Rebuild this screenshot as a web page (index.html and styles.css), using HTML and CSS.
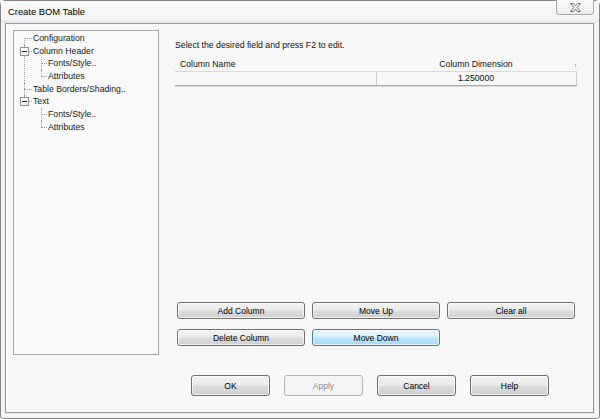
FILE: index.html
```html
<!DOCTYPE html>
<html>
<head>
<meta charset="utf-8">
<title>Create BOM Table</title>
<link rel="stylesheet" href="styles.css">
</head>
<body>
<div class="window">
  <div class="titlebar">
    <span class="title">Create BOM Table</span>
    <button class="close" aria-label="Close">
      <svg width="11" height="9" viewBox="0 0 11 9"><polygon points="0.5,0.5 3.5,0.5 5.5,3 7.5,0.5 10.5,0.5 7,4.5 10.5,8.5 7.5,8.5 5.5,6 3.5,8.5 0.5,8.5 4,4.5" fill="#fff" stroke="#707070" stroke-width="1"/></svg>
    </button>
  </div>
  <div class="client">
    <div class="main">
      <div class="tree-panel">
        <ul class="tree">
          <li><div class="row">Configuration</div></li>
          <li>
            <div class="row"><span class="toggle"></span>Column Header</div>
            <ul class="sub">
              <li><div class="row">Fonts/Style..</div></li>
              <li><div class="row">Attributes</div></li>
            </ul>
          </li>
          <li><div class="row">Table Borders/Shading..</div></li>
          <li>
            <div class="row"><span class="toggle"></span>Text</div>
            <ul class="sub">
              <li><div class="row">Fonts/Style..</div></li>
              <li><div class="row">Attributes</div></li>
            </ul>
          </li>
        </ul>
      </div>
      <div class="right">
        <p class="hint">Select the desired field and press F2 to edit.</p>
        <table class="grid">
          <colgroup><col class="c-name"><col class="c-dim"></colgroup>
          <thead>
            <tr><th class="name">Column Name</th><th class="dim">Column Dimension</th></tr>
          </thead>
          <tbody>
            <tr><td class="name"></td><td class="dim">1.250000</td></tr>
          </tbody>
        </table>
        <div class="actions">
          <button class="btn">Add Column</button>
          <button class="btn">Move Up</button>
          <button class="btn">Clear all</button>
          <button class="btn">Delete Column</button>
          <button class="btn hot">Move Down</button>
        </div>
      </div>
    </div>
    <div class="footer">
      <button class="btn big">OK</button>
      <button class="btn big disabled">Apply</button>
      <button class="btn big">Cancel</button>
      <button class="btn big">Help</button>
    </div>
  </div>
</div>
</body>
</html>
```
FILE: styles.css
```css
html, body {
  margin: 0;
  padding: 0;
  background: #f7f7f7;
}
body {
  font-family: "Liberation Sans", Arial, sans-serif;
  font-size: 8.7px;
  color: #111;
}
.window {
  width: 600px;
  height: 419px;
  box-sizing: border-box;
  border: 1px solid #858585;
  border-radius: 5px 5px 3px 3px;
  background: #f5f5f5;
  padding: 0 5px 5px 4px;
  display: flex;
  flex-direction: column;
}
.titlebar {
  height: 22px;
  display: flex;
  justify-content: space-between;
  align-items: flex-start;
  margin-left: -4px;
  margin-right: -5px;
  padding: 0 5px 0 7px;
  background: linear-gradient(#fafafa, #f3f3f3 85%, #e4ecf2 92%, #eef0f2);
}
.title {
  font-size: 9.4px;
  line-height: 22px;
  color: #000;
}
.close {
  width: 38px;
  height: 15px;
  margin: -1px 0 0 0;
  padding: 0;
  border: 1px solid #a9a9a9;
  border-top: none;
  border-radius: 0 0 4px 4px;
  background: linear-gradient(#fbfbfb, #eeeeee);
  display: flex;
  align-items: center;
  justify-content: center;
}
.close svg { display: block; margin-top: 1px; }
.client {
  flex: 1;
  border: 1px solid #9c9c9c;
  box-shadow: 0 0 0 1px #e8e8e8;
  background: #f8f8f8;
  padding: 6px 16px 15px 7px;
  display: flex;
  flex-direction: column;
}
.main {
  display: flex;
  gap: 16px;
  height: 325px;
}
.tree-panel {
  width: 146px;
  box-sizing: border-box;
  border: 1px solid #a7a7a7;
  background: #f9f9f9;
}
.tree, .sub {
  list-style: none;
  margin: 0;
  padding: 0;
}
.tree {
  padding-top: 1px;
}
.tree li {
  position: relative;
}
.row {
  position: relative;
  height: 12.7px;
  line-height: 12.7px;
  padding-left: 19px;
  white-space: nowrap;
  color: #1a1a1a;
  z-index: 1;
}
.sub .row {
  padding-left: 34px;
}
.tree > li::before {
  content: "";
  position: absolute;
  left: 10px;
  top: 6px;
  width: 8px;
  border-top: 1px dotted #a0a0a0;
}
.tree > li::after {
  content: "";
  position: absolute;
  left: 10px;
  top: 0;
  bottom: 0;
  border-left: 1px dotted #a0a0a0;
}
.tree > li:first-child::after { top: 6px; }
.tree > li:last-child::after { bottom: auto; height: 6px; }
.sub > li::before {
  content: "";
  position: absolute;
  left: 27px;
  top: 6px;
  width: 6px;
  border-top: 1px dotted #a0a0a0;
}
.sub > li::after {
  content: "";
  position: absolute;
  left: 27px;
  top: 0;
  bottom: 0;
  border-left: 1px dotted #a0a0a0;
}
.sub > li:last-child::after { bottom: auto; height: 6px; }
.toggle {
  position: absolute;
  left: 6px;
  top: 2px;
  width: 7px;
  height: 7px;
  border: 1px solid #939393;
  background: linear-gradient(#ffffff, #ececec);
}
.toggle::after {
  content: "";
  position: absolute;
  left: 1px;
  top: 3px;
  width: 5px;
  height: 1px;
  background: #222;
}
.right {
  flex: 1;
  display: flex;
  flex-direction: column;
  padding-bottom: 9px;
}
.hint {
  margin: 9px 0 0;
  line-height: 12px;
  color: #111;
}
.grid {
  margin-top: 7px;
  width: 401px;
  border-collapse: collapse;
  table-layout: fixed;
}
.c-name { width: 201px; }
.c-dim { width: 200px; }
.grid th, .grid td {
  height: 13px;
  padding: 0;
  font-weight: normal;
  line-height: 13px;
  color: #111;
}
.grid th {
  border-bottom: 1px solid #d9d9d9;
  position: relative;
}
.grid th.name {
  text-align: left;
  padding-left: 5px;
}
.grid th.dim {
  text-align: center;
}
.grid th.dim::after {
  content: "";
  position: absolute;
  right: 0;
  top: 6px;
  height: 3px;
  border-right: 1px dotted #9a9a9a;
}
.grid td {
  border-bottom: 1px solid #a9a9a9;
  box-shadow: 0 1px 0 #dcdcdc;
}
.grid td.dim {
  text-align: center;
  border-left: 1px solid #cfcfcf;
  border-right: 1px solid #cfcfcf;
}
.actions {
  margin-top: auto;
  padding-left: 2px;
  display: grid;
  grid-template-columns: 128px 128px 128px;
  column-gap: 7px;
  row-gap: 10px;
}
.btn {
  font-family: inherit;
  font-size: 8.5px;
  color: #000;
  height: 17px;
  padding: 0;
  border: 1px solid #707070;
  border-radius: 3px;
  background: linear-gradient(#f2f2f2 0%, #ebebeb 48%, #dddddd 52%, #cfcfcf 100%);
  box-shadow: inset 0 0 0 1px rgba(255,255,255,0.7);
  line-height: 14px;
}
.btn.hot {
  border-color: #3c7fb1;
  background: linear-gradient(#eaf6fd 0%, #d9f0fc 48%, #bee6fd 52%, #a7d9f5 100%);
}
.footer {
  margin-top: 20px;
  padding-left: 178px;
  display: flex;
  gap: 14px;
}
.btn.big {
  width: 79px;
  height: 21px;
}
.btn.disabled {
  color: #8c8c8c;
  border-color: #b5b5b5;
  background: #f4f4f4;
  box-shadow: none;
}
```
